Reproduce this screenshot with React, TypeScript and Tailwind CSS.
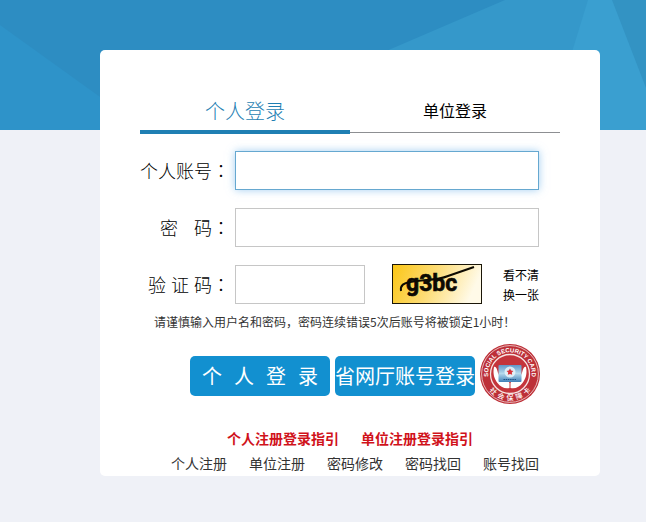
import type { ReactNode } from "react";

const fieldClass =
  "h-[39px] min-w-0 border bg-white px-3 text-base text-black outline-none";

function Banner() {
  return (
    <svg
      className="block h-[130px] w-full"
      viewBox="0 0 646 130"
      preserveAspectRatio="none"
      aria-hidden="true"
    >
      <rect width="646" height="130" fill="#2d8dc2" />
      <path d="M0 25 L146 130 H0Z" fill="#2e93c9" />
      <path d="M505 0 L202 130 H646 V0Z" fill="#3598ca" />
      <path d="M588 0 L548 130 H646 V0Z" fill="#3a9fd0" />
      <path d="M612 0 L646 88 V0Z" fill="#3393c3" />
    </svg>
  );
}

function Field({ id, label, children }: { id: string; label: ReactNode; children: ReactNode }) {
  return (
    <div className="flex items-center">
      <label htmlFor={id} className="flex w-[95px] shrink-0 justify-end pr-[5px] pb-0.5 text-lg leading-6 font-light text-black">
        {label}
        <span className="font-['Noto_Sans_CJK_TC',sans-serif]">：</span>
      </label>
      {children}
    </div>
  );
}

function Captcha() {
  return (
    <svg width="90" height="40" viewBox="0 0 90 40" role="img" aria-label="验证码" className="-mt-px ml-[27px] shrink-0">
      <defs>
        <linearGradient id="captcha-bg" x1="0" y1="0" x2="1" y2="0.2">
          <stop offset="0" stopColor="#fbc614" />
          <stop offset="0.5" stopColor="#fddc75" />
          <stop offset="1" stopColor="#fffae8" />
        </linearGradient>
      </defs>
      <rect x="0.5" y="0.5" width="89" height="39" fill="url(#captcha-bg)" stroke="#1a1608" />
      <text
        x="14"
        y="27"
        fill="#0d0a02"
        stroke="#0d0a02"
        strokeWidth="0.6"
        className="font-['Roboto',sans-serif] text-[23px] font-bold"
      >
        g3bc
      </text>
      <path d="M9 27 C8 21 12 19 18 18 C32 15 44 17 56 12 L82 3" fill="none" stroke="#0d0a02" strokeWidth="2" />
    </svg>
  );
}

function CardSeal() {
  return (
    <svg width="60" height="60" viewBox="0 0 60 60" role="img" aria-label="社会保障卡" className="shrink-0">
      <defs>
        <path id="seal-top" d="M9.5 37.5 A21.8 21.8 0 1 1 50.5 37.5" />
        <path id="seal-bottom" d="M4.4 38 A27 27 0 0 0 55.6 38" />
        <linearGradient id="seal-card" x1="0" y1="0" x2="0" y2="1">
          <stop offset="0" stopColor="#5f97c8" />
          <stop offset="0.5" stopColor="#b5d9ec" />
          <stop offset="1" stopColor="#3f80b8" />
        </linearGradient>
      </defs>
      <circle cx="30" cy="30" r="30" fill="#bd3038" />
      <circle cx="30" cy="30" r="28.4" fill="none" stroke="#f3d9d8" strokeWidth="0.8" />
      <circle cx="30" cy="30" r="19.5" fill="#c4343b" stroke="#f6e4e2" strokeWidth="1.3" />
      <path d="M14 23 c2-1 3 2 4 6 l3 6 c4-1 7 1 8.5 4 l0 5 c-5 1-9-1-12-5 c-3-4-5-9-3.5-16z" fill="#fff" />
      <path d="M46 23 c-2-1-3 2-4 6 l-3 6 c-4-1-7 1-8.5 4 l0 5 c5 1 9-1 12-5 c3-4 5-9 3.5-16z" fill="#fff" />
      <rect x="18.5" y="21" width="23" height="17" rx="1" fill="url(#seal-card)" />
      <circle cx="30" cy="28" r="5.5" fill="#eef7fb" opacity="0.8" />
      <path d="M30 24.5 l1.2 2 2.2 .5-1.6 1.6 .4 2.200-2.200-.8-2.200 .8 .4-2.200-1.600-1.600 2.200-.5z" fill="#d8333a" />
      <path d="M23.5 35.5 H36.5" stroke="#1d5286" strokeWidth="1.2" strokeDasharray="1.5 0.7" />
      <text className="font-['Liberation_Sans',sans-serif] text-[6px] font-bold" fill="#fff" textAnchor="middle">
        <textPath href="#seal-top" startOffset="50%">SOCIAL SECURITY CARD</textPath>
      </text>
      <text className="font-['Noto_Sans_CJK_SC',sans-serif] text-[7px] font-medium" fill="#fff" textAnchor="middle">
        <textPath href="#seal-bottom" startOffset="50%">{"社\u00a0\u00a0会\u00a0\u00a0保\u00a0\u00a0障\u00a0\u00a0卡"}</textPath>
      </text>
    </svg>
  );
}

const guides = ["个人注册登录指引", "单位注册登录指引"];
const links = ["个人注册", "单位注册", "密码修改", "密码找回", "账号找回"];

export default function App() {
  return (
    <div className="min-h-screen bg-[#eff1f7] font-['Noto_Sans_CJK_SC',sans-serif]">
      <Banner />
      <div className="relative -mt-20 flex justify-end pr-[46px]">
        <main className="w-full max-w-[500px] rounded-[5px] bg-white px-10 pt-10 pb-px">
          <div className="grid grid-cols-2 items-start" role="tablist">
            <button type="button" role="tab" aria-selected="true" className="h-11 border-b-4 border-[#1f7fb3] pt-0.5 text-xl font-light text-[#1f7fb3]">
              个人登录
            </button>
            <button type="button" role="tab" aria-selected="false" className="h-[43px] border-b border-[#8d8f92] pb-0.5 text-base text-black">
              单位登录
            </button>
          </div>

          <form className="mt-[17px]" onSubmit={(event) => event.preventDefault()}>
            <div className="flex flex-col gap-[18px] pr-[21px]">
              <Field id="account" label="个人账号">
                <input id="account" type="text" className={`${fieldClass} flex-1 border-[#66a8d0] shadow-[0_0_8px_rgba(102,175,233,0.6)]`} />
              </Field>
              <Field id="password" label={<><span>密</span><span className="ml-4">码</span></>}>
                <input id="password" type="password" className={`${fieldClass} flex-1 border-[#c6c6c6]`} />
              </Field>
              <Field id="captcha" label={<span className="flex gap-[5px]"><span>验</span><span>证</span><span>码</span></span>}>
                <input id="captcha" type="text" className={`${fieldClass} w-[130px] border-[#c6c6c6]`} />
                <Captcha />
                <button type="button" className="-my-px ml-auto text-xs leading-5 text-black">
                  看不清
                  <br />
                  换一张
                </button>
              </Field>
            </div>

            <p className="mt-2 pl-3.5 text-xs leading-5 whitespace-nowrap text-[#333]">
              请谨慎输入用户名和密码，密码连续错误5次后账号将被锁定1小时！
            </p>

            <div className="mt-3 flex items-center justify-end gap-[5px] pr-5">
              <div className="flex gap-[5px] pt-1 text-xl text-white">
                <button type="submit" className="flex h-10 w-[140px] items-center justify-center gap-3 rounded-[5px] bg-[#1290d0]">
                  <span>个</span>
                  <span>人</span>
                  <span>登</span>
                  <span>录</span>
                </button>
                <button type="button" className="h-10 w-[140px] rounded-[5px] bg-[#1290d0] whitespace-nowrap">
                  省网厅账号登录
                </button>
              </div>
              <CardSeal />
            </div>
          </form>

          <nav className="mt-[22px] flex flex-col gap-px text-sm leading-6">
            <div className="flex justify-center gap-[22px] font-bold text-[#d0121b]">
              {guides.map((text) => (
                <a key={text} href="#guide">{text}</a>
              ))}
            </div>
            <div className="flex justify-end gap-[22px] pr-[21px] text-[#333]">
              {links.map((text) => (
                <a key={text} href="#account">{text}</a>
              ))}
            </div>
          </nav>
        </main>
      </div>
    </div>
  );
}
